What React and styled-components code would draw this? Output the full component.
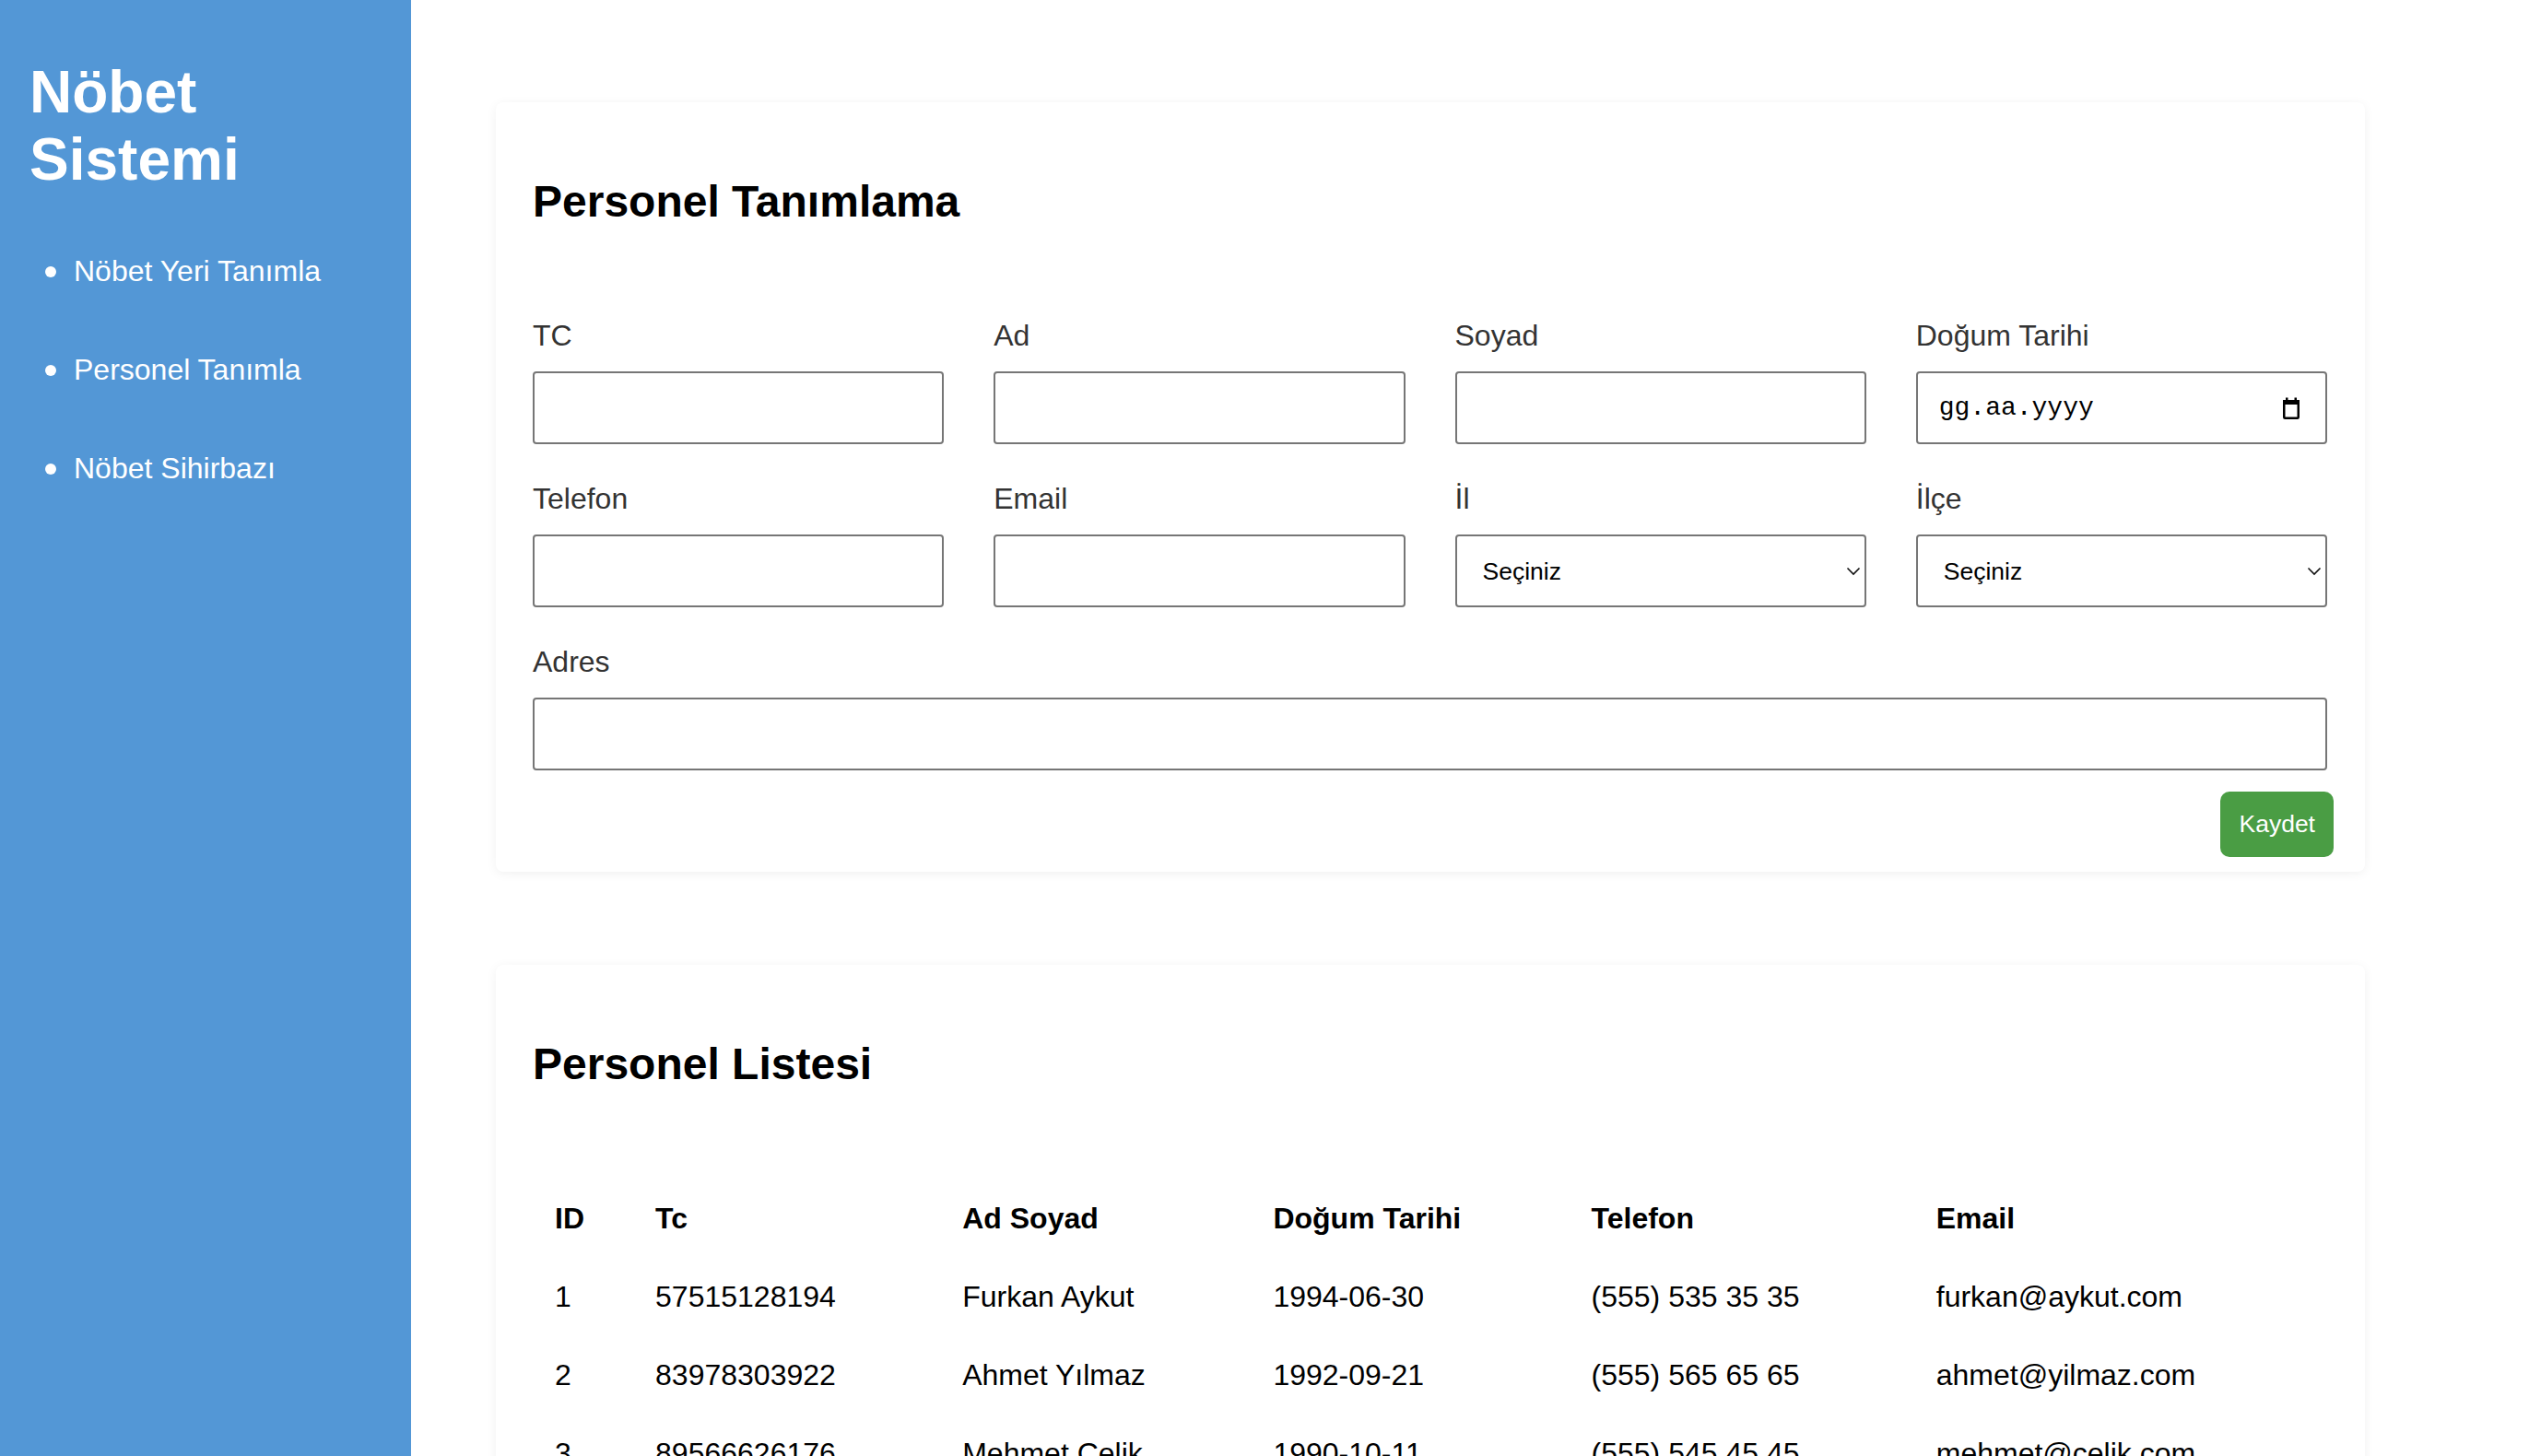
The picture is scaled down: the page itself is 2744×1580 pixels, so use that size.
import React from "react";
import styled, { createGlobalStyle } from "styled-components";

const GlobalStyle = createGlobalStyle`
  html, body {
    margin: 0;
    padding: 0;
    background: #ffffff;
    font-family: "Liberation Sans", Arial, Helvetica, sans-serif;
  }
  * { box-sizing: border-box; }
`;

const Layout = styled.div`
  display: flex;
  height: 100vh;
  overflow: hidden;
`;

const Sidebar = styled.aside`
  width: 446px;
  flex-shrink: 0;
  background: #5397d6;
  color: #ffffff;
  padding: 64px 0 0 32px;
`;

const Brand = styled.h1`
  margin: 0;
  font-size: 64px;
  line-height: 73px;
  font-weight: 700;
  color: #ffffff;
`;

const NavList = styled.ul`
  list-style: none;
  margin: 66px 0 0;
  padding: 0 0 0 17px;
  display: flex;
  flex-direction: column;
  gap: 70px;
`;

const NavItem = styled.li`
  display: flex;
  align-items: center;
  gap: 19px;
  font-size: 32px;
  line-height: 37px;
  color: #ffffff;
  &::before {
    content: "";
    width: 12px;
    height: 12px;
    border-radius: 50%;
    background: #ffffff;
    flex-shrink: 0;
  }
`;

const Main = styled.main`
  flex: 1;
  padding: 111px 0 0 92px;
  display: flex;
  flex-direction: column;
  gap: 101px;
`;

const Card = styled.section`
  width: 2028px;
  background: #ffffff;
  border-radius: 8px;
  box-shadow: 0 2px 12px rgba(0, 0, 0, 0.06);
  padding: ${(p) => (p.$form ? "40px 34px 16px 40px" : "40px 40px 40px 40px")};
  flex-shrink: 0;
`;

const CardTitle = styled.h2`
  margin: 40px 0 0;
  font-size: 48px;
  font-weight: 700;
  color: #000000;
`;

const FormGrid = styled.div`
  display: grid;
  grid-template-columns: repeat(4, 1fr);
  column-gap: 54px;
  row-gap: 41px;
  margin: 100px 7px 0 0;
`;

const Field = styled.div`
  display: flex;
  flex-direction: column;
  gap: 20px;
  grid-column: ${(p) => (p.$full ? "1 / -1" : "auto")};
`;

const Label = styled.label`
  font-size: 32px;
  line-height: 37px;
  color: #333333;
`;

const TextInput = styled.input`
  height: 79px;
  width: 100%;
  border: 2px solid #767676;
  border-radius: 4px;
  background: #ffffff;
  padding: 0 23px;
  font-family: ${(p) => (p.$mono ? '"Liberation Mono", "DejaVu Sans Mono", monospace' : '"Liberation Sans", Arial, sans-serif')};
  font-size: ${(p) => (p.$mono ? "28px" : "27px")};
  color: #000000;
  outline: none;
  &::placeholder {
    color: #000000;
    opacity: 1;
  }
`;

const ControlWrap = styled.div`
  position: relative;
  width: 100%;
`;

const Select = styled.select`
  appearance: none;
  -webkit-appearance: none;
  height: 79px;
  width: 100%;
  border: 2px solid #767676;
  border-radius: 4px;
  background: #ffffff;
  padding: 0 28px;
  font-family: "Liberation Sans", Arial, sans-serif;
  font-size: 26.5px;
  color: #000000;
  outline: none;
`;

const OverlayIcon = styled.svg`
  position: absolute;
  top: 50%;
  right: ${(p) => p.$right}px;
  transform: translateY(-50%);
  pointer-events: none;
`;

const Actions = styled.div`
  display: flex;
  justify-content: flex-end;
  margin-top: 23px;
`;

const SaveButton = styled.button`
  height: 71px;
  padding: 0 20px;
  border: none;
  border-radius: 10px;
  background: #4a9d44;
  color: #ffffff;
  font-family: "Liberation Sans", Arial, sans-serif;
  font-size: 26.5px;
  cursor: pointer;
`;

const Table = styled.table`
  width: 100%;
  margin-top: 98px;
  border-collapse: collapse;
  table-layout: fixed;
  font-size: 32px;
  color: #000000;
`;

const HeadCell = styled.th`
  text-align: left;
  font-weight: 700;
  padding: 24px;
  line-height: 37px;
`;

const Cell = styled.td`
  padding: 24px;
  line-height: 37px;
  white-space: nowrap;
`;

const Chevron = () => (
  <OverlayIcon $right={6} width="16" height="10" viewBox="0 0 16 10">
    <path d="M1.5 1.5 L8 8 L14.5 1.5" fill="none" stroke="#111" strokeWidth="1.6" />
  </OverlayIcon>
);

const CalendarIcon = () => (
  <OverlayIcon $right={28} width="22" height="24" viewBox="0 0 22 24">
    <rect x="5" y="0.5" width="2.5" height="4" fill="#000" />
    <rect x="14.5" y="0.5" width="2.5" height="4" fill="#000" />
    <rect x="2" y="3" width="18" height="5" fill="#000" />
    <rect x="3.25" y="4.25" width="15.5" height="18.5" rx="1" fill="none" stroke="#000" strokeWidth="2.5" />
  </OverlayIcon>
);

const columns = [
  { key: "id", label: "ID", width: 109 },
  { key: "tc", label: "Tc", width: 333 },
  { key: "name", label: "Ad Soyad", width: 337 },
  { key: "birth", label: "Doğum Tarihi", width: 345 },
  { key: "phone", label: "Telefon", width: 374 },
  { key: "email", label: "Email", width: 449 },
];

const people = [
  { id: 1, tc: "57515128194", name: "Furkan Aykut", birth: "1994-06-30", phone: "(555) 535 35 35", email: "furkan@aykut.com" },
  { id: 2, tc: "83978303922", name: "Ahmet Yılmaz", birth: "1992-09-21", phone: "(555) 565 65 65", email: "ahmet@yilmaz.com" },
  { id: 3, tc: "89566626176", name: "Mehmet Çelik", birth: "1990-10-11", phone: "(555) 545 45 45", email: "mehmet@celik.com" },
];

export default function App() {
  return (
    <>
      <GlobalStyle />
      <Layout>
        <Sidebar>
          <Brand>
            Nöbet
            <br />
            Sistemi
          </Brand>
          <NavList>
            <NavItem>Nöbet Yeri Tanımla</NavItem>
            <NavItem>Personel Tanımla</NavItem>
            <NavItem>Nöbet Sihirbazı</NavItem>
          </NavList>
        </Sidebar>
        <Main>
          <Card $form>
            <CardTitle>Personel Tanımlama</CardTitle>
            <FormGrid>
              <Field>
                <Label>TC</Label>
                <TextInput type="text" />
              </Field>
              <Field>
                <Label>Ad</Label>
                <TextInput type="text" />
              </Field>
              <Field>
                <Label>Soyad</Label>
                <TextInput type="text" />
              </Field>
              <Field>
                <Label>Doğum Tarihi</Label>
                <ControlWrap>
                  <TextInput type="text" $mono placeholder="gg.aa.yyyy" readOnly />
                  <CalendarIcon />
                </ControlWrap>
              </Field>
              <Field>
                <Label>Telefon</Label>
                <TextInput type="text" />
              </Field>
              <Field>
                <Label>Email</Label>
                <TextInput type="text" />
              </Field>
              <Field>
                <Label>İl</Label>
                <ControlWrap>
                  <Select defaultValue="">
                    <option value="">Seçiniz</option>
                  </Select>
                  <Chevron />
                </ControlWrap>
              </Field>
              <Field>
                <Label>İlçe</Label>
                <ControlWrap>
                  <Select defaultValue="">
                    <option value="">Seçiniz</option>
                  </Select>
                  <Chevron />
                </ControlWrap>
              </Field>
              <Field $full>
                <Label>Adres</Label>
                <TextInput type="text" />
              </Field>
            </FormGrid>
            <Actions>
              <SaveButton type="button">Kaydet</SaveButton>
            </Actions>
          </Card>
          <Card>
            <CardTitle>Personel Listesi</CardTitle>
            <Table>
              <colgroup>
                {columns.map((c) => (
                  <col key={c.key} style={{ width: c.width }} />
                ))}
              </colgroup>
              <thead>
                <tr>
                  {columns.map((c) => (
                    <HeadCell key={c.key}>{c.label}</HeadCell>
                  ))}
                </tr>
              </thead>
              <tbody>
                {people.map((p) => (
                  <tr key={p.id}>
                    {columns.map((c) => (
                      <Cell key={c.key}>{p[c.key]}</Cell>
                    ))}
                  </tr>
                ))}
              </tbody>
            </Table>
          </Card>
        </Main>
      </Layout>
    </>
  );
}
